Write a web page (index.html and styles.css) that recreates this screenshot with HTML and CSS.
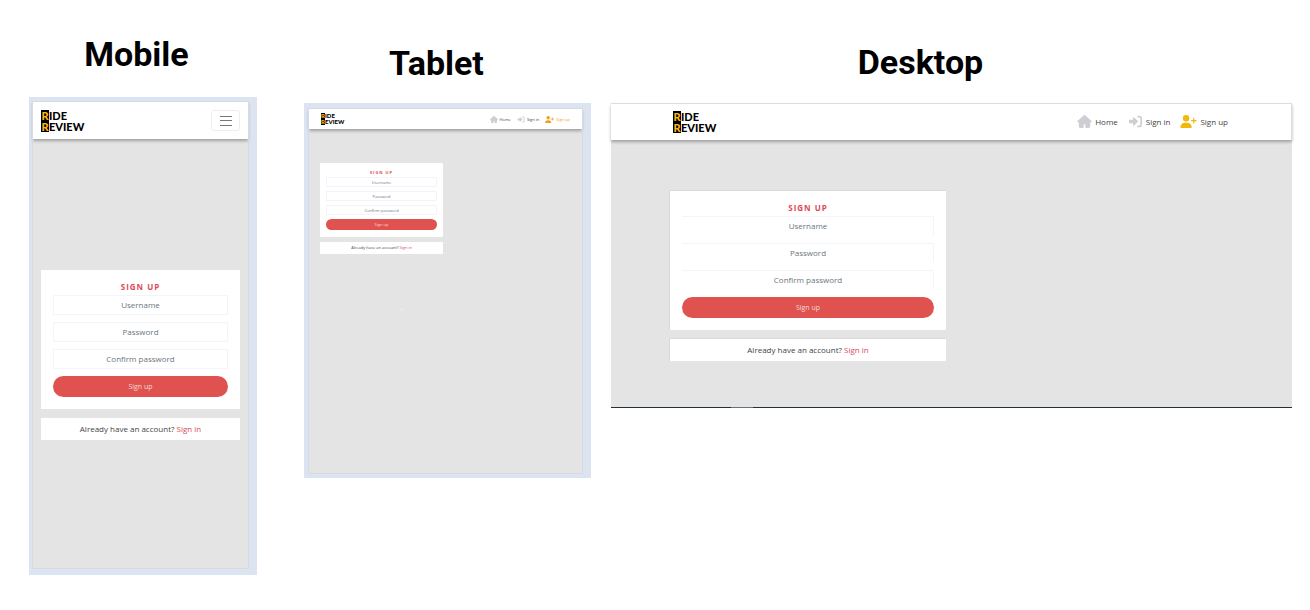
FILE: index.html
```html
<!DOCTYPE html>
<html lang="en">
<head>
<meta charset="utf-8">
<meta name="viewport" content="width=device-width, initial-scale=1">
<title>Ride Review – sign up page</title>
<link rel="stylesheet" href="styles.css">
</head>
<body>
<svg class="sprite" aria-hidden="true">
  <symbol id="icon-home" viewBox="0 0 576 512"><path d="M575.8 255.500c0 18-15 32.100-32 32.100h-32l.7 160.200c0 35-28 64.200-63 64.200H352c-18 0-32-14-32-32v-96c0-18-14-32-32-32s-32 14-32 32v96c0 18-14 32-32 32h-96c-36 0-64-29-64-64V287.600H32c-18 0-32-14-32-32.100 0-9 3-17 10-24L266.400 8c7-7 15-8 22-8s15 2 21 7l255.400 224.500c8 7 12 15 11 24z"/></symbol>
  <symbol id="icon-in" viewBox="0 0 512 512"><path d="M352 96h64c18 0 32 14 32 32v256c0 18-14 32-32 32h-64c-18 0-32 14-32 32s14 32 32 32h64c53 0 96-43 96-96V128c0-53-43-96-96-96h-64c-18 0-32 14-32 32s14 32 32 32zM342 273c6-6 10-15 10-24s-4-18-10-25L198 96c-7-7-17-9-26-6-9 4-15 13-15 23v71H32c-18 0-32 14-32 32v80c0 18 14 32 32 32h125v71c0 10 6 19 15 23 9 3 19 1 26-6z"/></symbol>
  <symbol id="icon-up" viewBox="0 0 640 512"><path d="M96 128a128 128 0 1 1 256 0 128 128 0 1 1-256 0zM0 482c0-98 80-178 178-178h92c98 0 178 80 178 178 0 17-13 30-30 30H30c-17 0-30-13-30-30zM504 312v-64h-64c-13 0-24-11-24-24s11-24 24-24h64v-64c0-13 11-24 24-24s24 11 24 24v64h64c13 0 24 11 24 24s-11 24-24 24h-64v64c0 13-11 24-24 24s-24-11-24-24z"/></symbol>
</svg>

<main class="showcase">
  <section class="device mobile">
    <h2 class="device-name">Mobile</h2>
    <div class="frame">
      <div class="screen">
        <header class="navbar">
          <a class="logo" href="#"><span><b>R</b>IDE</span><span><b>R</b>EVIEW</span></a>
          <button class="toggler" type="button" aria-label="Toggle navigation">
            <svg viewBox="0 0 12 12"><path d="M0 1.500h12M0 5.500h12M0 10.500h12"/></svg>
          </button>
        </header>
        <div class="content">
          <form class="card">
            <h3 class="card-title">SIGN UP</h3>
            <input class="field" type="text" placeholder="Username" aria-label="Username">
            <input class="field" type="password" placeholder="Password" aria-label="Password">
            <input class="field" type="password" placeholder="Confirm password" aria-label="Confirm password">
            <button class="submit" type="button">Sign up</button>
          </form>
          <p class="card-note">Already have an account? <a href="#">Sign in</a></p>
        </div>
      </div>
    </div>
  </section>

  <section class="device tablet">
    <h2 class="device-name">Tablet</h2>
    <div class="frame">
      <div class="screen">
        <header class="navbar">
          <a class="logo" href="#"><span><b>R</b>IDE</span><span><b>R</b>EVIEW</span></a>
          <nav class="links">
            <a href="#"><svg><use href="#icon-home"/></svg>Home</a>
            <a href="#"><svg><use href="#icon-in"/></svg>Sign in</a>
            <a class="active" href="#"><svg><use href="#icon-up"/></svg>Sign up</a>
          </nav>
        </header>
        <div class="content">
          <form class="card">
            <h3 class="card-title">SIGN UP</h3>
            <input class="field" type="text" placeholder="Username" aria-label="Username">
            <input class="field" type="password" placeholder="Password" aria-label="Password">
            <input class="field" type="password" placeholder="Confirm password" aria-label="Confirm password">
            <button class="submit" type="button">Sign up</button>
          </form>
          <p class="card-note">Already have an account? <a href="#">Sign in</a></p>
        </div>
      </div>
    </div>
  </section>

  <section class="device desktop">
    <h2 class="device-name">Desktop</h2>
    <div class="frame">
      <div class="screen">
        <header class="navbar">
          <a class="logo" href="#"><span><b>R</b>IDE</span><span><b>R</b>EVIEW</span></a>
          <nav class="links">
            <a href="#"><svg><use href="#icon-home"/></svg>Home</a>
            <a href="#"><svg><use href="#icon-in"/></svg>Sign in</a>
            <a class="active" href="#"><svg><use href="#icon-up"/></svg>Sign up</a>
          </nav>
        </header>
        <div class="content">
          <form class="card">
            <h3 class="card-title">SIGN UP</h3>
            <input class="field" type="text" placeholder="Username" aria-label="Username">
            <input class="field" type="password" placeholder="Password" aria-label="Password">
            <input class="field" type="password" placeholder="Confirm password" aria-label="Confirm password">
            <button class="submit" type="button">Sign up</button>
          </form>
          <p class="card-note">Already have an account? <a href="#">Sign in</a></p>
        </div>
      </div>
    </div>
  </section>
</main>
</body>
</html>
```

FILE: styles.css
```css
* { box-sizing: border-box; }

body {
  margin: 0;
  background: #fff;
  font-family: "Open Sans", "Noto Sans", sans-serif;
  color: #444;
}

a { color: inherit; text-decoration: none; }
h2, h3, p { margin: 0; }
.sprite { display: none; }

.showcase {
  display: grid;
  grid-template-columns: 228fr 47fr 287fr 20fr 681fr;
  align-items: start;
  padding: 0 18px 0 29px;
}
.mobile { grid-column: 1; }
.tablet { grid-column: 3; }
.desktop { grid-column: 5; }

.device-name {
  font: 700 34px/40px Roboto, sans-serif;
  color: #000;
  text-align: center;
}
.mobile .device-name { padding: 34px 13px 23px 0; }
.tablet .device-name { padding: 43px 22px 20px 0; }
.desktop .device-name { padding: 42px 62px 21px 0; }

.frame { background: #dde4f1; }
.mobile .frame { padding: 5px 9px 6px 4px; }
.tablet .frame { padding: 6px 9px 4px 5px; }

.screen { background: #e4e4e4; }
.mobile .screen, .tablet .screen { outline: 1px solid #d5dae3; }
.desktop .screen { border-bottom: 1px solid #22313c; }

.navbar {
  display: flex;
  align-items: center;
  justify-content: space-between;
  background: #fff;
  box-shadow: 0 2px 3px rgba(0, 0, 0, .3);
}
.mobile .navbar { height: 37px; padding: 0 8px; }
.tablet .navbar { height: 20px; padding: 0 12px; }
.desktop .navbar {
  height: 37px;
  padding: 0 63px 1px 62px;
  border-top: 1px solid #ddd;
  border-right: 1px solid #ddd;
}

.logo {
  display: flex;
  flex-direction: column;
  font: 900 11px/11px Lato, sans-serif;
  color: #000;
}
.logo span { display: flex; }
.logo b {
  width: 8px;
  background: #000;
  color: #fdb913;
  text-align: center;
}
.tablet .logo { font-size: 6px; line-height: 6px; }
.tablet .logo b { width: 4px; }

.toggler {
  display: grid;
  place-items: center;
  width: 29px;
  height: 21px;
  padding: 0;
  background: #fff;
  border: 1px solid #eee;
  border-radius: 3px;
}
.toggler svg { width: 12px; height: 12px; stroke: #777; fill: none; }

.links { display: flex; font-size: 8px; gap: 10px; }
.links a { display: flex; align-items: center; gap: 3px; }
.links svg { width: 15px; height: 13px; fill: #ceced2; }
.links .active svg { width: 17px; fill: #f2b90c; }
.tablet .links { font-size: 4px; gap: 6px; }
.tablet .links a { gap: 2px; }
.tablet .links svg { width: 8px; height: 7px; }
.tablet .links .active { color: #f59e1b; }
.tablet .links .active svg { width: 9px; fill: #f59e1b; }

.mobile .content { padding: 131px 8px 128px; }
.mobile .frame { padding-bottom: 7px; }
.tablet .content { position: relative; padding: 34px 139px 219px 11px; }
.tablet .frame { padding-bottom: 5px; }
.desktop .content { position: relative; padding: 50px 346px 46px 58px; }

/* light speck on the empty tablet page */
.tablet .content::after {
  content: "";
  position: absolute;
  left: 92px;
  top: 180px;
  width: 1px;
  height: 1px;
  background: #fff;
}
/* pale stretch of the desktop baseline */
.desktop .content::after {
  content: "";
  position: absolute;
  left: 120px;
  bottom: -1px;
  width: 22px;
  height: 1px;
  background: #65737c;
}

.card {
  display: flex;
  flex-direction: column;
  gap: 7px;
  padding: 9px 12px 12px;
  background: #fff;
}
.card-title {
  font-size: 8px;
  line-height: 16px;
  margin-bottom: -7px;
  letter-spacing: 1px;
  font-weight: 700;
  text-align: center;
  color: #de4a55;
}
.field {
  width: 100%;
  height: 20px;
  padding: 0 0 2px;
  border: 1px solid #f3f4f9;
  border-radius: 1px;
  background: #fff;
  font: 8px/16px "Open Sans", sans-serif;
  text-align: center;
}
.field::placeholder { color: #6c757d; opacity: 1; }
.submit {
  height: 21px;
  padding: 0;
  border: 0;
  border-radius: 11px;
  background: #df5250;
  font: 7px/21px "Open Sans", sans-serif;
  color: #f3d9d6;
}
.card-note {
  margin-top: 9px;
  background: #fff;
  font-size: 8px;
  line-height: 22px;
  text-align: center;
}
.card-note a { color: #dc4a60; }

.desktop .card, .desktop .card-note {
  border-top: 1px solid #d9d9d9;
  border-left: 1px solid #d9d9d9;
}
.desktop .card-note { margin-top: 8px; }
.desktop .field { border-left-color: #fff; border-bottom-color: #fff; }

.tablet .card { gap: 4px; padding: 5px 6px 7px; }
.tablet .card-title { font-size: 4px; line-height: 9px; margin-bottom: -4px; }
.tablet .field { height: 10px; padding: 0; font-size: 4px; line-height: 8px; }
.tablet .submit { height: 11px; font-size: 4px; line-height: 11px; }
.tablet .card-note { margin-top: 5px; font-size: 4px; line-height: 12px; }
```
